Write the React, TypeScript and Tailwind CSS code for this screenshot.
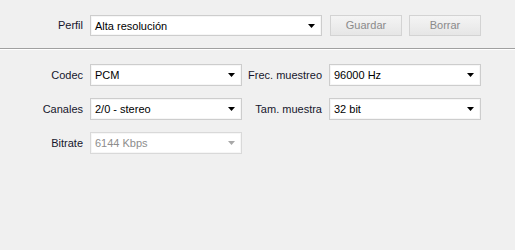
import type { ReactNode } from "react";

function Arrow({ disabled }: { disabled?: boolean }) {
  return (
    <svg width="7" height="4" viewBox="0 0 7 4" className="shrink-0">
      <path d="M0 0h7L3.5 4z" fill={disabled ? "#a8a8a8" : "#000"} />
    </svg>
  );
}

function Combo({ value, width, height = "h-[22px]", disabled }: { value: string; width: string; height?: string; disabled?: boolean }) {
  return (
    <div
      className={`${width} ${height} flex items-center justify-between border bg-white pl-[4px] pr-[6px] shadow-[inset_0_0_0_1px_#f6f6f6] ${
        disabled ? "border-[#d9d9d9] text-[#8d8d8d]" : "border-[#cdcdcd] text-black"
      }`}
    >
      <span className="pt-px">{value}</span>
      <Arrow disabled={disabled} />
    </div>
  );
}

function Label({ width, children }: { width: string; children: ReactNode }) {
  return <div className={`${width} shrink-0 pr-[7px] text-right text-[#16162c]`}>{children}</div>;
}

function Button({ children }: { children: ReactNode }) {
  return (
    <div className="flex h-[21px] w-[72px] items-center justify-center border border-[#d3d3d3] bg-gradient-to-b from-[#f4f4f4] to-[#e6e6e6] text-[#8a8a8a]">
      {children}
    </div>
  );
}

export default function App() {
  return (
    <div className="h-[250px] w-[515px] overflow-hidden bg-[#f0f0f0] font-['Liberation_Sans',Arial,sans-serif] text-[11px]">
      <div className="flex items-center pt-[15px]">
        <Label width="w-[90px]">Perfil</Label>
        <Combo value="Alta resolución" width="w-[232px]" height="h-[21px]" />
        <div className="ml-[8px]">
          <Button>Guardar</Button>
        </div>
        <div className="ml-[7px]">
          <Button>Borrar</Button>
        </div>
      </div>

      <div className="mt-[12px] h-px bg-[#a0a0a0]" />
      <div className="h-px bg-white" />

      <div className="mt-[14px] flex flex-col gap-[12px]">
        <div className="flex items-center">
          <Label width="w-[90px]">Codec</Label>
          <Combo value="PCM" width="w-[152px]" />
          <Label width="w-[87px]">Frec. muestreo</Label>
          <Combo value="96000 Hz" width="w-[152px]" />
        </div>
        <div className="flex items-center">
          <Label width="w-[90px]">Canales</Label>
          <Combo value="2/0 - stereo" width="w-[152px]" />
          <Label width="w-[87px]">Tam. muestra</Label>
          <Combo value="32 bit" width="w-[152px]" />
        </div>
        <div className="flex items-center">
          <Label width="w-[90px]">Bitrate</Label>
          <Combo value="6144 Kbps" width="w-[152px]" disabled />
        </div>
      </div>
    </div>
  );
}
